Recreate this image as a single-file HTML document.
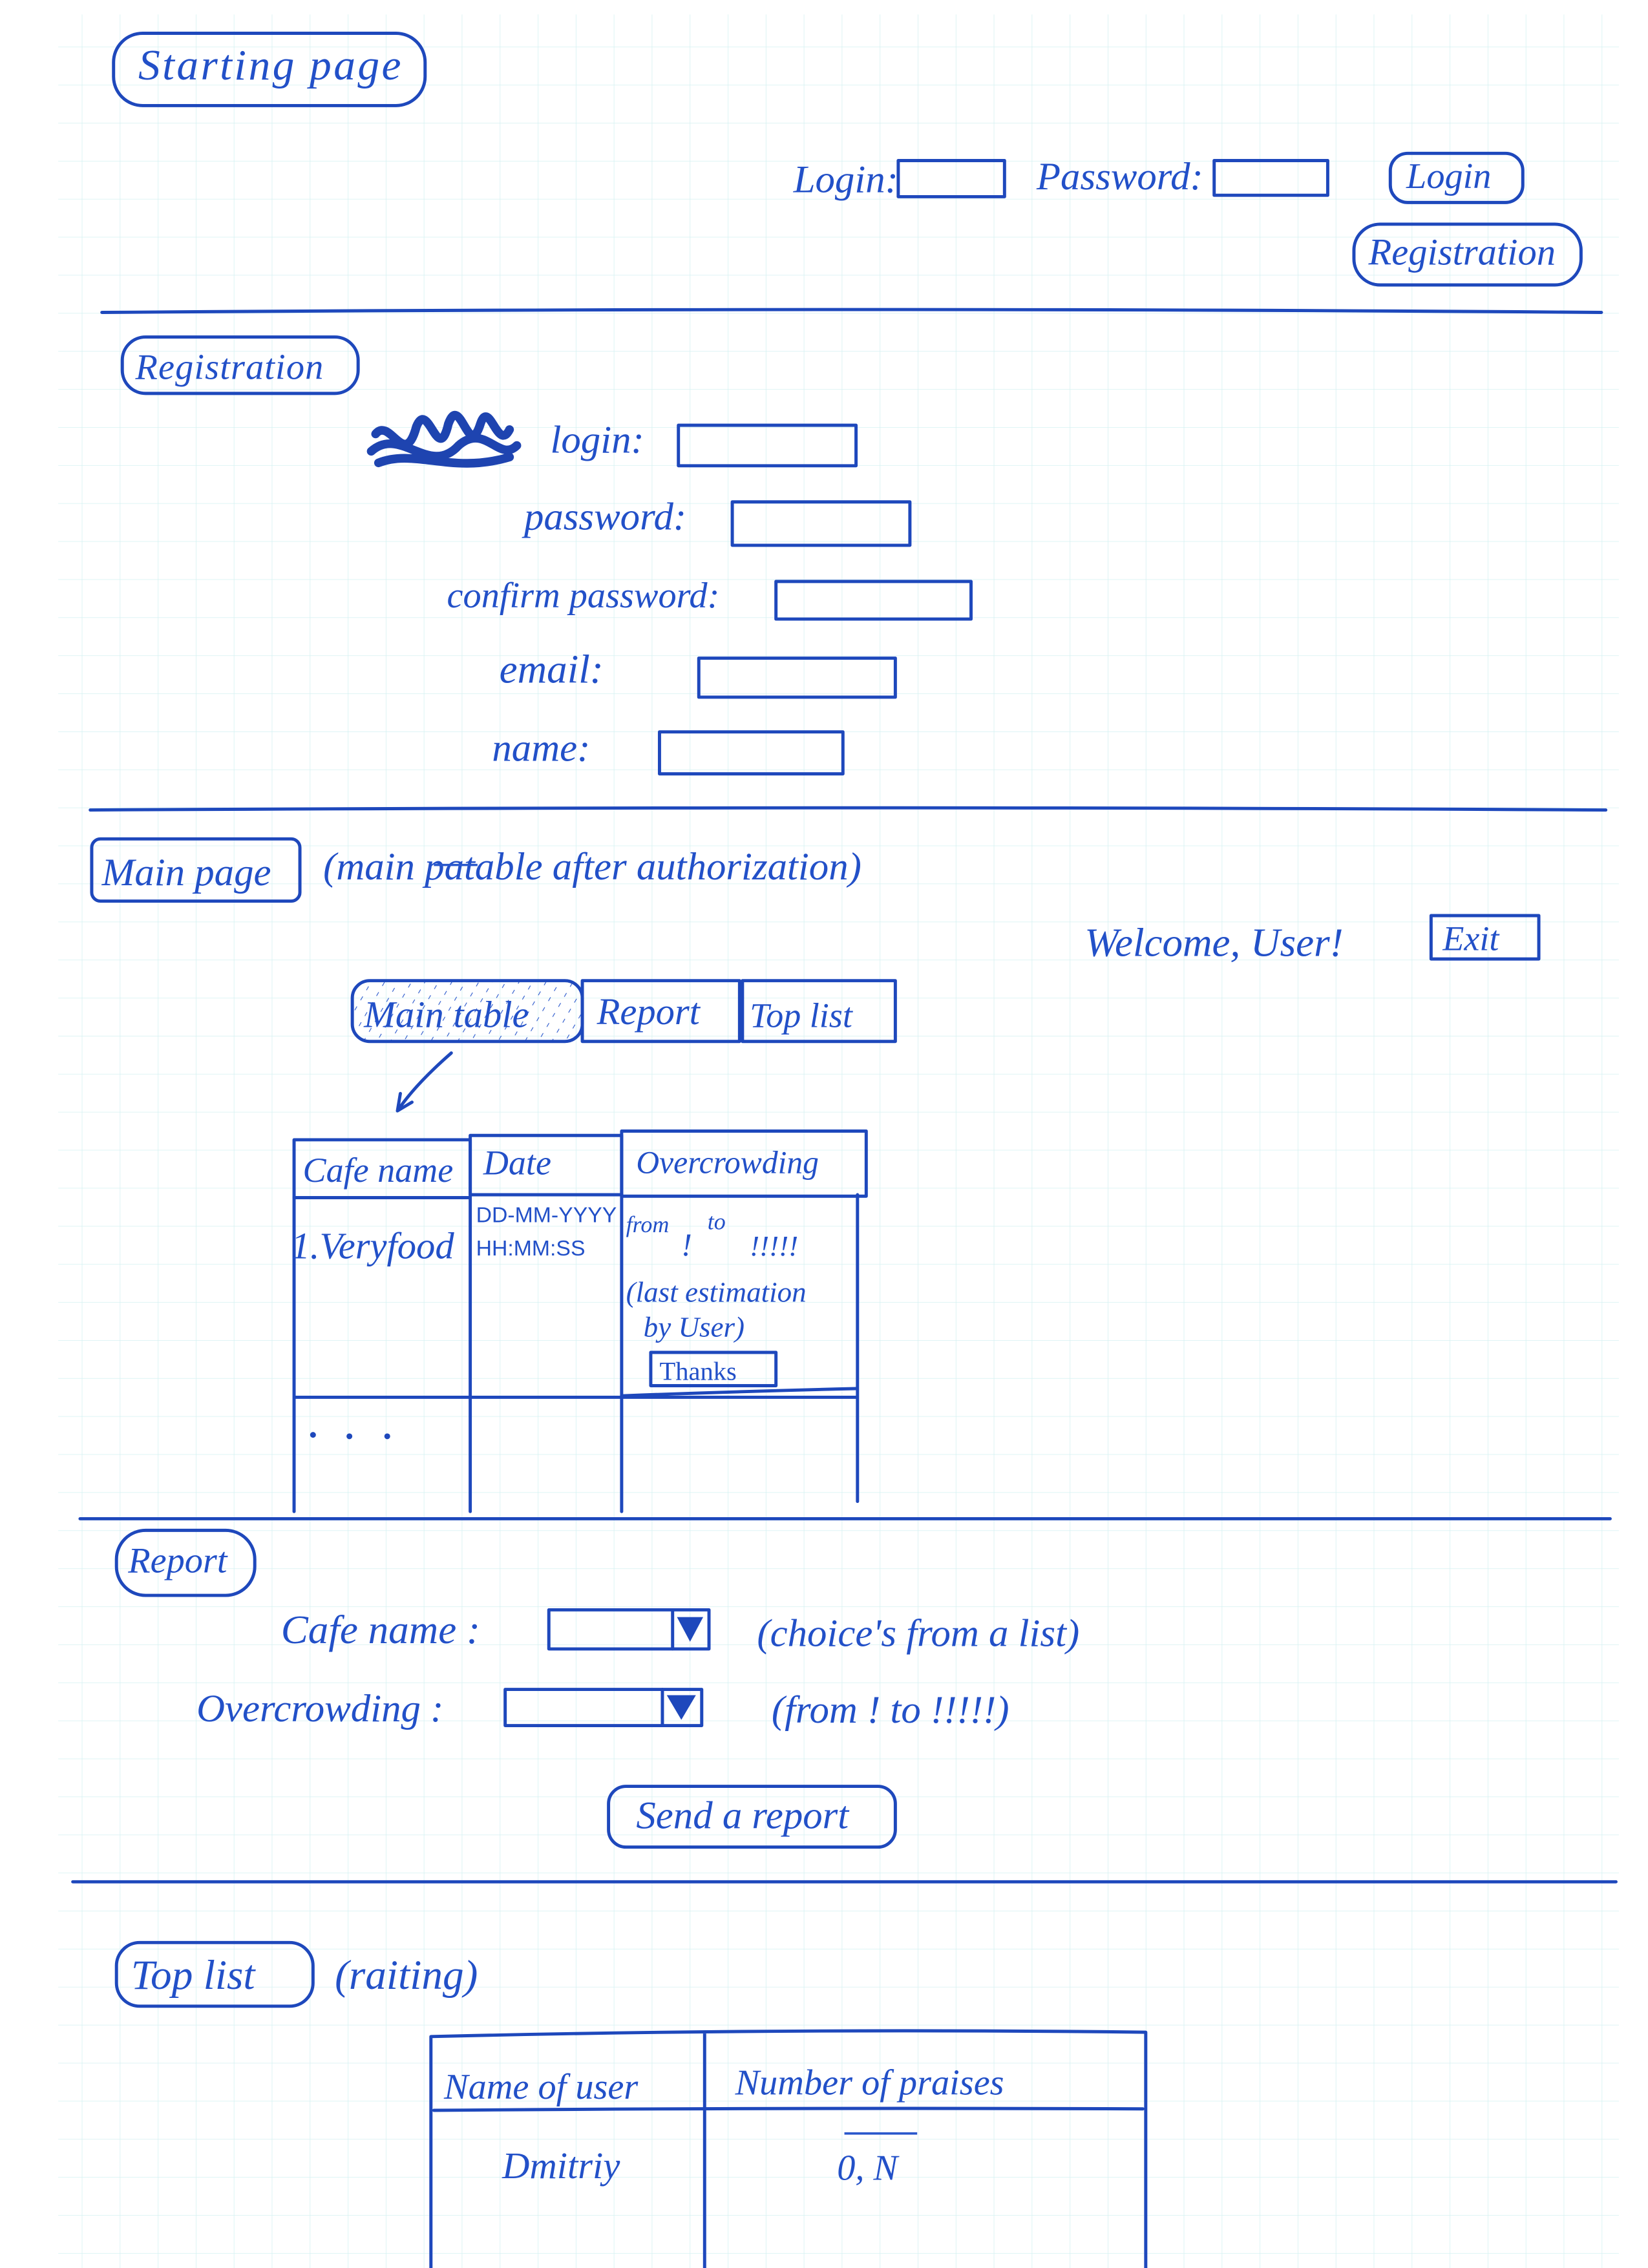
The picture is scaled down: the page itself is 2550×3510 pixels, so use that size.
<!DOCTYPE html>
<html><head><meta charset="utf-8"><style>
html,body{margin:0;padding:0;background:#fff;}
svg{display:block;}
text{font-family:"Liberation Serif",serif;font-style:italic;fill:#2250c8;}
.b{fill:none;stroke:#1e48bc;stroke-width:2.2;stroke-linecap:round;stroke-linejoin:round;}
.t{fill:none;stroke:#2a58cc;stroke-width:1.6;}
</style></head><body>
<svg width="2550" height="3510" viewBox="0 0 1132 1568" preserveAspectRatio="none" xmlns="http://www.w3.org/2000/svg">
<defs>
<pattern id="g" x="4" y="6" width="26.1" height="26.3" patternUnits="userSpaceOnUse">
<path d="M0 0H26.1M0 0V26.3" fill="none" stroke="#d4f1f2" stroke-width="0.7"/>
</pattern>
<pattern id="h" width="8" height="8" patternUnits="userSpaceOnUse" patternTransform="rotate(30)">
<path d="M0 0V3" stroke="#2a58cc" stroke-width="1"/>
</pattern>
</defs>
<rect x="0" y="0" width="1132" height="1568" fill="#fff"/>
<rect x="40" y="10" width="1072" height="1558" fill="url(#g)"/>

<rect class="b" x="78" y="23" width="214" height="50" rx="20" stroke-width="2.8"/>
<text x="95" y="55" font-size="30" letter-spacing="1.5">Starting  page</text>
<text x="545" y="133" font-size="27">Login:</text>
<rect class="b" x="617" y="111" width="73" height="25"/>
<text x="712" y="131" font-size="27">Password:</text>
<rect class="b" x="834" y="111" width="78" height="24"/>
<rect class="b" x="955" y="106" width="91" height="34" rx="12"/>
<text x="966" y="130" font-size="25">Login</text>
<rect class="b" x="930" y="155" width="156" height="42" rx="18"/>
<text x="940" y="183" font-size="26">Registration</text>
<path class="b" d="M70 216 Q600 212 1100 216"/>

<rect class="b" x="84" y="233" width="162" height="39" rx="16"/>
<text x="93" y="262" font-size="25" letter-spacing="0.5">Registration</text>
<path d="M258 300 c10-12 20 25 28-5 c8-20 15 28 22-2 c8-22 14 26 22 0 c6-18 12 20 20 4 M255 312 c20-18 40 18 60-4 c18-16 28 12 40 0 M260 320 c25-10 50 8 90-4" stroke="#1e44b0" stroke-width="6" fill="none" stroke-linecap="round"/>
<text x="378" y="313" font-size="27">login:</text>
<rect class="b" x="466" y="294" width="122" height="28"/>
<text x="360" y="366" font-size="27">password:</text>
<rect class="b" x="503" y="347" width="122" height="30"/>
<text x="307" y="420" font-size="25">confirm password:</text>
<rect class="b" x="533" y="402" width="134" height="26"/>
<text x="343" y="472" font-size="28">email:</text>
<rect class="b" x="480" y="455" width="135" height="27"/>
<text x="338" y="526" font-size="27">name:</text>
<rect class="b" x="453" y="506" width="126" height="29"/>
<path class="b" d="M62 560 Q600 557 1103 560"/>

<rect class="b" x="63" y="580" width="143" height="43" rx="6"/>
<text x="70" y="612" font-size="27">Main page</text>
<text x="222" y="608" font-size="27">(main patable  after  authorization)</text>
<path class="t" d="M298 598 l30 0"/>
<text x="745" y="661" font-size="28">Welcome, User!</text>
<rect class="b" x="983" y="633" width="74" height="30"/>
<text x="991" y="657" font-size="24">Exit</text>
<rect x="242" y="678" width="158" height="42" rx="12" fill="url(#h)"/>
<rect class="b" x="242" y="678" width="158" height="42" rx="12"/>
<text x="250" y="710" font-size="26">Main table</text>
<rect class="b" x="400" y="678" width="108" height="42"/>
<text x="410" y="708" font-size="26">Report</text>
<rect class="b" x="510" y="678" width="105" height="42"/>
<text x="515" y="710" font-size="24">Top list</text>
<path class="b" d="M310 728 Q285 750 273 768 M273 768 l2-12 M273 768 l10-6"/>

<rect class="b" x="202" y="788" width="121" height="40"/>
<rect class="b" x="323" y="785" width="104" height="41"/>
<rect class="b" x="427" y="782" width="168" height="45"/>
<path class="b" d="M202 828 V1045 M323 828 V1045 M427 826 V1045 M589 826 V1038 M202 966 H589"/>
<path class="b" d="M427 965 Q505 962 588 960"/>
<text x="208" y="817" font-size="24">Cafe name</text>
<text x="332" y="812" font-size="24">Date</text>
<text x="437" y="811" font-size="22">Overcrowding</text>
<text x="200" y="870" font-size="26">1.Veryfood</text>
<text x="327" y="845" font-size="15" style="font-style:normal;font-family:'Liberation Sans',sans-serif">DD-MM-YYYY</text>
<text x="327" y="868" font-size="15" style="font-style:normal;font-family:'Liberation Sans',sans-serif">HH:MM:SS</text>
<text x="430" y="852" font-size="16">from</text>
<text x="486" y="850" font-size="16">to</text>
<text x="468" y="868" font-size="22">!</text>
<text x="515" y="868" font-size="20">!!!!!</text>
<text x="430" y="900" font-size="20">(last estimation</text>
<text x="442" y="924" font-size="20">by User)</text>
<rect class="b" x="447" y="935" width="86" height="23"/>
<text x="453" y="954" font-size="18" style="font-style:normal">Thanks</text>
<circle cx="215" cy="992" r="2" fill="#1e48bc"/><circle cx="240" cy="993" r="2" fill="#1e48bc"/><circle cx="266" cy="993" r="2" fill="#1e48bc"/>
<path class="b" d="M55 1050 Q600 1048 1106 1050"/>

<rect class="b" x="80" y="1058" width="95" height="45" rx="20"/>
<text x="88" y="1087" font-size="25">Report</text>
<text x="193" y="1136" font-size="28">Cafe  name :</text>
<rect class="b" x="377" y="1113" width="110" height="27"/>
<path class="b" d="M462 1113 V1140"/><path d="M465 1118 h18 l-9 17z" fill="#1e48bc"/>
<text x="520" y="1138" font-size="27">(choice's  from  a  list)</text>
<text x="135" y="1190" font-size="27">Overcrowding :</text>
<rect class="b" x="347" y="1168" width="135" height="25"/>
<path class="b" d="M455 1168 V1193"/><path d="M458 1172 h20 l-10 17z" fill="#1e48bc"/>
<text x="530" y="1191" font-size="27">(from  !  to  !!!!!)</text>
<rect class="b" x="418" y="1235" width="197" height="42" rx="12"/>
<text x="437" y="1264" font-size="27">Send  a  report</text>
<path class="b" d="M50 1301 Q600 1299 1110 1301"/>

<rect class="b" x="80" y="1343" width="135" height="44" rx="16"/>
<text x="90" y="1375" font-size="29">Top  list</text>
<text x="230" y="1375" font-size="29">(raiting)</text>
<path class="b" d="M296 1568 V1408 Q540 1402 787 1405 V1568 M484 1406 V1568 M298 1459 Q540 1457 785 1458"/>
<text x="305" y="1451" font-size="25">Name of user</text>
<text x="505" y="1448" font-size="25">Number  of  praises</text>
<text x="345" y="1506" font-size="26">Dmitriy</text>
<text x="575" y="1507" font-size="25">0, N</text>
<path class="t" d="M580 1475 H630"/>
</svg>
</body></html>
